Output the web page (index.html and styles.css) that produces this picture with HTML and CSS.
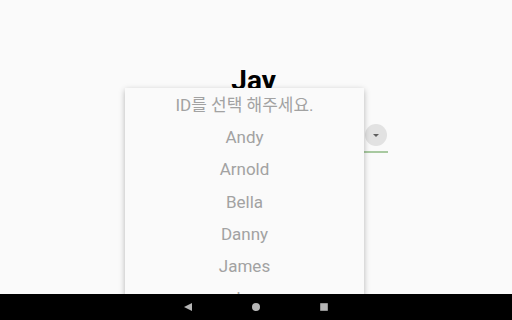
FILE: index.html
```html
<!DOCTYPE html>
<html lang="ko">
<head>
<meta charset="utf-8">
<link rel="stylesheet" href="styles.css">
</head>
<body>
<div class="screen">
  <main class="content">
    <h1 class="title">Jay</h1>
    <div class="spinner">
      <span class="spinner-arrow">
        <svg width="22" height="22" viewBox="0 0 22 22"><path d="M8 10h6l-3 3z" fill="#5f5f5f"/></svg>
      </span>
    </div>
    <ul class="menu">
      <li>ID를 선택 해주세요.</li>
      <li>Andy</li>
      <li>Arnold</li>
      <li>Bella</li>
      <li>Danny</li>
      <li>James</li>
      <li>Jay</li>
    </ul>
  </main>
  <nav class="navbar">
    <svg width="10" height="10" viewBox="0 0 10 10"><path d="M9 1v8L1 5z" fill="#b5b5b5"/></svg>
    <svg width="10" height="10" viewBox="0 0 10 10"><circle cx="5" cy="5" r="4" fill="#b5b5b5"/></svg>
    <svg width="10" height="10" viewBox="0 0 10 10"><rect x="1.2" y="1.2" width="7.6" height="7.6" fill="#b5b5b5"/></svg>
  </nav>
</div>
</body>
</html>
```
FILE: styles.css
```css
html, body {
  margin: 0;
  padding: 0;
  width: 512px;
  height: 320px;
  overflow: hidden;
  background: #fafafa;
  font-family: Roboto, "Noto Sans CJK KR", sans-serif;
}
.screen {
  display: flex;
  flex-direction: column;
  height: 320px;
}
.content {
  position: relative;
  flex: 1;
  overflow: hidden;
  display: flex;
  flex-direction: column;
  align-items: center;
}
.title {
  margin: 67px 5px 0 0;
  font-size: 28px;
  line-height: 28px;
  font-weight: 700;
  color: #000;
}
.spinner {
  margin-top: 24px;
  width: 262px;
  height: 32px;
  border-bottom: 2px solid #a8c9a0;
  display: flex;
  justify-content: flex-end;
  align-items: center;
  padding-right: 1px;
  box-sizing: content-box;
}
.spinner-arrow {
  width: 22px;
  height: 22px;
  border-radius: 50%;
  background: #e2e2e2;
  display: flex;
}
.menu {
  position: absolute;
  left: 125px;
  top: 88px;
  width: 239px;
  height: 212px;
  margin: 0;
  padding: 1px 0 0;
  list-style: none;
  background: #fafafa;
  box-shadow: 0 2px 6px rgba(0, 0, 0, 0.28);
  box-sizing: border-box;
}
.menu li {
  height: 32.2px;
  line-height: 32px;
  text-align: center;
  font-size: 17px;
  color: #a2a2a2;
}
.navbar {
  height: 26px;
  background: #000;
  display: flex;
  justify-content: center;
  align-items: center;
  gap: 58px;
}
```
